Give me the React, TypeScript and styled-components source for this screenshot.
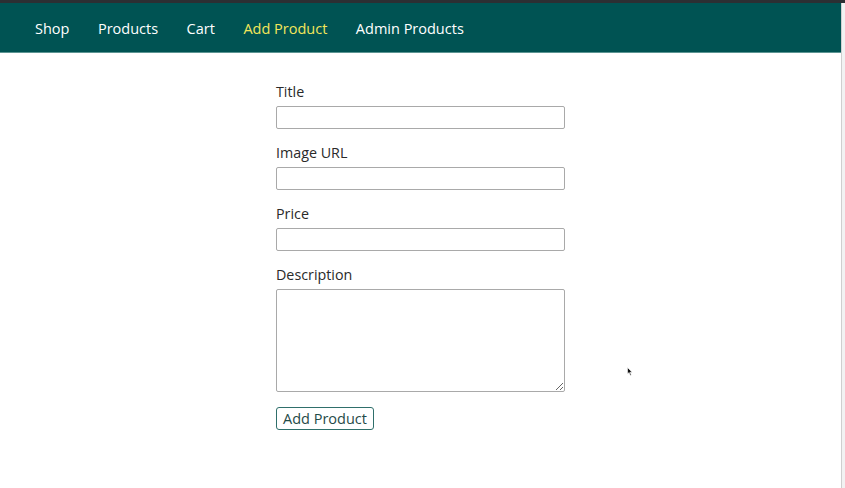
import { createGlobalStyle, styled } from "styled-components";

const GlobalStyle = createGlobalStyle`
  html, body {
    margin: 0;
    padding: 0;
    background: #ffffff;
    font-family: "Open Sans", "Liberation Sans", sans-serif;
  }
`;

const Frame = styled.div`
  position: relative;
  width: 845px;
  height: 488px;
  overflow: hidden;
  display: flex;
  flex-direction: column;
`;

const TopStrip = styled.div`
  height: 3px;
  background: #2c2f33;
`;

const Body = styled.div`
  flex: 1;
  display: flex;
`;

const Page = styled.div`
  flex: 1;
  display: flex;
  flex-direction: column;
`;

const Edge = styled.div`
  width: 3px;
  background: #f2f2f2;
  border-left: 1px solid #cfcfcf;
`;

const Header = styled.header`
  height: 49px;
  background: #005353;
  border-bottom: 1px solid #5d9593;
  display: flex;
  align-items: center;
  padding: 0 35px;
`;

const NavList = styled.ul`
  list-style: none;
  margin: 0;
  padding: 0;
  display: flex;
  gap: 28.5px;
`;

const NavLink = styled.a<{ active?: boolean }>`
  font-size: 14.5px;
  color: ${({ active }) => (active ? "#f2e65a" : "#ffffff")};
  text-decoration: none;
  line-height: 20px;
`;

const Form = styled.form`
  width: 289px;
  margin: 29px auto 0;
  display: flex;
  flex-direction: column;
`;

const FormControl = styled.div`
  display: flex;
  flex-direction: column;
  margin-bottom: 14px;
`;

const Label = styled.label`
  font-size: 14.3px;
  line-height: 20px;
  color: #2a2a2a;
  margin-bottom: 4px;
`;

const Input = styled.input`
  box-sizing: border-box;
  height: 23px;
  width: 100%;
  border: 1px solid #a9a9a9;
  border-radius: 2px;
  font: inherit;
  padding: 0 4px;
  outline: none;
`;

const TextArea = styled.textarea`
  box-sizing: border-box;
  height: 103px;
  width: 100%;
  border: 1px solid #a9a9a9;
  border-radius: 2px;
  font: inherit;
  padding: 4px;
  outline: none;
  resize: vertical;
`;

const Button = styled.button`
  align-self: flex-start;
  margin-top: 1px;
  height: 23px;
  width: 98px;
  box-sizing: border-box;
  background: #ffffff;
  border: 1px solid #2f6f6b;
  border-radius: 3px;
  color: #1f4a48;
  font-family: "Open Sans", "Liberation Sans", sans-serif;
  font-size: 14.5px;
  padding: 0;
  cursor: pointer;
`;

const Cursor = styled.svg`
  position: absolute;
  left: 627px;
  top: 367px;
`;

const links = ["Shop", "Products", "Cart", "Add Product", "Admin Products"];

export default function App() {
  return (
    <Frame>
      <GlobalStyle />
      <TopStrip />
      <Body>
        <Page>
          <Header>
            <nav>
              <NavList>
                {links.map((l) => (
                  <li key={l}>
                    <NavLink href="#" active={l === "Add Product"}>
                      {l}
                    </NavLink>
                  </li>
                ))}
              </NavList>
            </nav>
          </Header>
          <Form onSubmit={(e) => e.preventDefault()}>
            <FormControl>
              <Label>Title</Label>
              <Input type="text" />
            </FormControl>
            <FormControl>
              <Label>Image URL</Label>
              <Input type="text" />
            </FormControl>
            <FormControl>
              <Label>Price</Label>
              <Input type="text" />
            </FormControl>
            <FormControl>
              <Label>Description</Label>
              <TextArea />
            </FormControl>
            <Button type="submit">Add Product</Button>
          </Form>
        </Page>
        <Edge />
      </Body>
      <Cursor width="6" height="9" viewBox="0 0 6 9">
        <path d="M0.5 0.5 L0.5 7 L2 5.5 L3.3 8.5 L4.3 8 L3.1 5.2 L5.2 5.2 Z" fill="#111" stroke="#fff" strokeWidth="0.6" />
      </Cursor>
    </Frame>
  );
}
